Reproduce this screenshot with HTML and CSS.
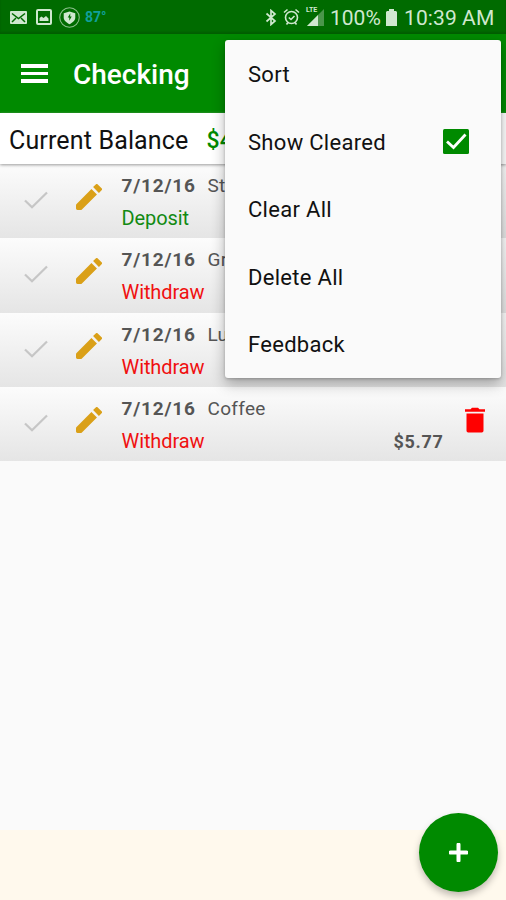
FILE: index.html
```html
<!DOCTYPE html>
<html lang="en">
<head>
<meta charset="utf-8">
<title>Checking</title>
<link rel="stylesheet" href="styles.css">
</head>
<body>
<svg class="defs" width="0" height="0">
  <symbol id="check" viewBox="0 0 24 18"><path d="M1 9.500 8 16.300 23 1.500" fill="none" stroke="currentColor" stroke-width="2.200"/></symbol>
  <symbol id="pencil" viewBox="3 3 18 18"><path d="M3 17.800V20q0 1 1 1h2.200q.5 0 .9-.4L17.500 10.300l-3.800-3.800L3.400 16.900q-.4.400-.4.900zM20.710 7.340a1 1 0 0 0 0-1.410l-2.640-2.640a1 1 0 0 0-1.410 0l-1.830 1.830 4.050 4.050 1.830-1.830z" fill="currentColor"/></symbol>
</svg>
<header class="status">
  <svg class="mail" viewBox="0 0 17 13"><rect width="17" height="13" rx="1" fill="currentColor"/><path d="M2 2.500 8.500 7.500 15 2.500M2 11l4-4M15 11l-4-4" fill="none" stroke="#006b00" stroke-width="1.500"/></svg>
  <svg class="image" viewBox="0 0 16 16"><rect x="1" y="1" width="14" height="14" rx="1" fill="none" stroke="currentColor" stroke-width="2"/><path d="M3.500 12V9l2-1.500 2 1.500 2.500-2 2.500 2.500V12z" fill="currentColor"/></svg>
  <svg class="shield" viewBox="0 0 20 20"><circle cx="10" cy="10" r="9.300" fill="none" stroke="#8cc08c" stroke-width="1"/><path d="M10 4.300 15.500 6v4c0 3-3 5-5.500 6.500C7.500 15 4.500 13 4.500 10V6z" fill="currentColor"/><path d="M10.800 6 8.300 10h1.500v3l2.300-4h-1.500z" fill="#006b00"/></svg>
  <span class="temp">87°</span>
  <span class="spacer"></span>
  <svg class="bluetooth" viewBox="0 0 12 17"><path d="M1.500 4.500 10 12l-4 3.500v-14L10 5l-8.500 7.500" fill="none" stroke="currentColor" stroke-width="1.700"/></svg>
  <svg class="alarm" viewBox="0 0 17 18"><circle cx="8.500" cy="9.500" r="6" fill="none" stroke="currentColor" stroke-width="1.600"/><path d="M1 4.500 4.500 1.500M16 4.500l-3.500-3M3.500 16.500 5 14.500M13.500 16.500 12 14.500M5.800 9.500l2.200 2 3.500-3.500" fill="none" stroke="currentColor" stroke-width="1.600"/></svg>
  <span class="signal"><span class="lte">LTE</span><svg viewBox="0 0 18 18"><path d="M1 18 18 1v17z" fill="#4b964b"/><path d="M1 18 12 7v11z" fill="currentColor"/></svg></span>
  <span class="percent">100%</span>
  <svg class="battery" viewBox="0 0 11 17"><path d="M3 0h5v2h2l1 1v14H0V3l1-1h2z" fill="currentColor"/></svg>
  <span class="clock">10:39 AM</span>
</header>
<div class="toolbar">
  <div class="burger"><i></i><i></i><i></i></div>
  <h1>Checking</h1>
</div>
<div class="balance"><span>Current Balance</span><span class="amount">$4</span></div>
<main>
  <article class="row">
    <svg class="tick"><use href="#check"/></svg><svg class="edit"><use href="#pencil"/></svg>
    <div class="info"><p class="top"><b>7/12/16</b><span>St</span></p><p class="deposit">Deposit</p></div>
  </article>
  <article class="row">
    <svg class="tick"><use href="#check"/></svg><svg class="edit"><use href="#pencil"/></svg>
    <div class="info"><p class="top"><b>7/12/16</b><span>Gr</span></p><p class="withdraw">Withdraw</p></div>
  </article>
  <article class="row">
    <svg class="tick"><use href="#check"/></svg><svg class="edit"><use href="#pencil"/></svg>
    <div class="info"><p class="top"><b>7/12/16</b><span>Lu</span></p><p class="withdraw">Withdraw</p></div>
  </article>
  <article class="row">
    <svg class="tick"><use href="#check"/></svg><svg class="edit"><use href="#pencil"/></svg>
    <div class="info"><p class="top"><b>7/12/16</b><span>Coffee</span></p><p class="withdraw">Withdraw</p></div>
    <b class="sum">$5.77</b>
    <svg class="trash" viewBox="0 0 20 26"><path d="M0 2.300h5.500L7 .8h6l1.500 1.500H20v2.400H0zM1.500 6.500h17v17.300q0 1.700-1.700 1.700H3.200q-1.700 0-1.700-1.700z" fill="#f00"/></svg>
  </article>
</main>
<footer></footer>
<nav class="menu">
  <div class="item">Sort</div>
  <div class="item">Show Cleared<svg class="checkbox" viewBox="0 0 26 25"><rect width="26" height="25" rx="1.500" fill="#008a00"/><path d="M4 12.500l6.500 6L22.500 5.500" fill="none" stroke="#fff" stroke-width="2.800"/></svg></div>
  <div class="item">Clear All</div>
  <div class="item">Delete All</div>
  <div class="item">Feedback</div>
</nav>
<button class="fab" aria-label="Add"><svg viewBox="0 0 19 19"><path d="M9.500 1.500v16M1.500 9.500h16" stroke="#fff" stroke-width="4" stroke-linecap="round"/></svg></button>
</body>
</html>
```
FILE: styles.css
```css
* { box-sizing: border-box; }
body { margin: 0; width: 506px; height: 900px; overflow: hidden; position: relative; display: flex; flex-direction: column; background: #fafafa; font-family: Roboto, sans-serif; color: #111; }
p, h1 { margin: 0; }
svg { display: block; flex: none; }
.defs { position: absolute; }
.status { height: 34px; flex: none; background: #006b00; color: #cfe8cf; display: flex; align-items: center; padding: 0 9px 0 10px; box-shadow: inset 0 -2px 2px #005e00; }
.mail { width: 17px; height: 13px; }
.image { width: 16px; height: 16px; margin-left: 9px; }
.shield { width: 21px; height: 21px; margin-left: 7px; }
.temp { margin-left: 5px; font-size: 14px; color: #10a09c; font-weight: 700; }
.spacer { flex: 1; }
.bluetooth { width: 12px; height: 17px; }
.alarm { width: 17px; height: 18px; margin-left: 6px; }
.signal { width: 18px; height: 18px; margin-left: 6px; position: relative; }
.signal svg { width: 18px; height: 18px; }
.lte { position: absolute; left: 0; top: -1px; font-size: 7px; line-height: 7px; font-weight: 700; }
.percent { width: 53px; margin-left: 6px; font-size: 21px; line-height: 34px; padding-top: 2px; white-space: nowrap; }
.battery { width: 11px; height: 17px; margin-left: 3px; }
.clock { width: 93px; margin-left: 7px; font-size: 21px; line-height: 34px; padding-top: 2px; letter-spacing: .1px; white-space: nowrap; }
.toolbar { height: 79px; flex: none; background: #008a00; display: flex; align-items: center; padding-left: 21px; color: #fff; }
.burger { width: 27px; display: grid; gap: 4px; }
.burger i { height: 3.500px; background: #fff; }
.toolbar h1 { margin-left: 25px; font-size: 28px; font-weight: 500; line-height: 32px; padding-top: 3px; }
.balance { height: 51px; flex: none; display: flex; align-items: center; padding: 4px 0 0 9px; background: #fff; font-size: 25px; letter-spacing: .15px; white-space: nowrap; box-shadow: 0 1px 3px #999; position: relative; }
.amount { margin-left: 18px; color: #008a00; font-weight: 500; font-size: 23px; }
main { display: grid; grid-template-rows: repeat(4, 74.300px); flex: none; }
.row { display: flex; background: linear-gradient(#fcfcfc, #e5e5e5); padding-left: 24px; color: #555; }
.tick { width: 24px; height: 18px; margin-top: 27px; color: #c6c6c6; }
.edit { width: 26px; height: 26px; margin: 20px 0 0 28px; color: #daa018; }
.info { margin-left: 19.500px; padding-top: 9px; font-size: 19px; width: 272px; }
.top, .deposit, .withdraw { line-height: 26px; letter-spacing: .3px; }
.top { display: flex; }
.top b { width: 86px; letter-spacing: .8px; }
.deposit, .withdraw { margin-top: 6px; font-size: 20px; letter-spacing: -.1px; }
.deposit { color: #128a12; }
.withdraw { color: #f01010; }
.sum { width: 50px; padding-top: 42px; font-size: 18px; line-height: 26px; letter-spacing: .7px; }
.trash { width: 20px; height: 26px; margin: 20px 0 0 21px; }
footer { margin-top: auto; height: 70px; background: #fff9ed; }
.menu { position: absolute; left: 225px; top: 40px; width: 276px; height: 338px; padding: 1px 0 0 23px; background: #fafafa; border-radius: 3px; box-shadow: 0 6px 14px rgba(0,0,0,.3), 0 1px 3px rgba(0,0,0,.2); }
.item { height: 67.500px; display: flex; align-items: center; justify-content: space-between; font-size: 22px; letter-spacing: .3px; padding-right: 32px; }
.checkbox { width: 26px; height: 25px; margin-top: -2px; }
.fab { position: absolute; left: 419px; top: 813px; width: 79px; height: 79px; padding: 0; border: 0; border-radius: 50%; background: #008a00; display: grid; place-items: center; box-shadow: 0 4px 7px rgba(0,0,0,.25); }
.fab svg { width: 19px; height: 19px; }
```
